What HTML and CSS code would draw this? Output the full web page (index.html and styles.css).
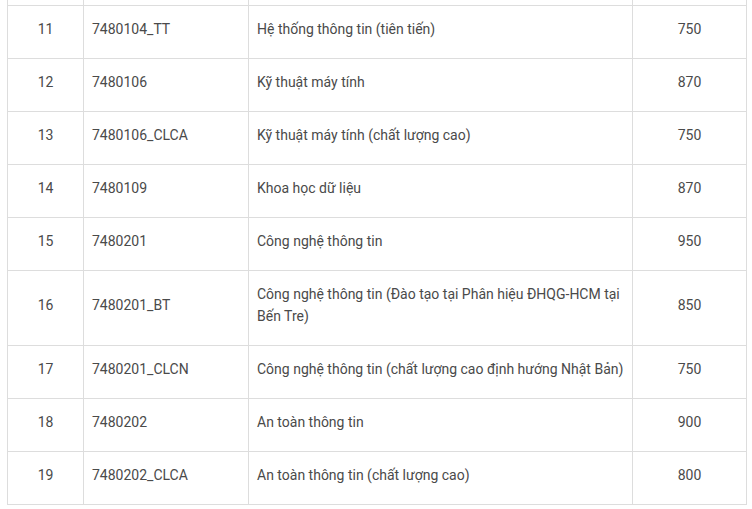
FILE: index.html
```html
<!DOCTYPE html>
<html lang="vi">
<head>
<meta charset="utf-8">
<link rel="stylesheet" href="styles.css">
</head>
<body>
<div class="frame">
<table class="grid">
<colgroup><col class="c1"><col class="c2"><col class="c3"><col class="c4"></colgroup>
<tbody>
<tr class="cut"><td>&nbsp;</td><td>&nbsp;</td><td>&nbsp;</td><td>&nbsp;</td></tr>
<tr><td class="num">11</td><td>7480104_TT</td><td>Hệ thống thông tin (tiên tiến)</td><td class="num">750</td></tr>
<tr><td class="num">12</td><td>7480106</td><td>Kỹ thuật máy tính</td><td class="num">870</td></tr>
<tr><td class="num">13</td><td>7480106_CLCA</td><td>Kỹ thuật máy tính (chất lượng cao)</td><td class="num">750</td></tr>
<tr><td class="num">14</td><td>7480109</td><td>Khoa học dữ liệu</td><td class="num">870</td></tr>
<tr><td class="num">15</td><td>7480201</td><td>Công nghệ thông tin</td><td class="num">950</td></tr>
<tr><td class="num">16</td><td>7480201_BT</td><td>Công nghệ thông tin (Đào tạo tại Phân hiệu ĐHQG-HCM tại Bến Tre)</td><td class="num">850</td></tr>
<tr><td class="num">17</td><td>7480201_CLCN</td><td>Công nghệ thông tin (chất lượng cao định hướng Nhật Bản)</td><td class="num">750</td></tr>
<tr><td class="num">18</td><td>7480202</td><td>An toàn thông tin</td><td class="num">900</td></tr>
<tr><td class="num">19</td><td>7480202_CLCA</td><td>An toàn thông tin (chất lượng cao)</td><td class="num">800</td></tr>
</tbody>
</table>
</div>
</body>
</html>
```
FILE: styles.css
```css
html, body {
  margin: 0;
  padding: 0;
  background: #fff;
}
.frame {
  height: 509px;
  overflow: hidden;
  padding-left: 7px;
}
.grid {
  margin-top: -47px;
  width: 739px;
  border-collapse: collapse;
  table-layout: fixed;
  font-family: Roboto, "Noto Sans", sans-serif;
  font-size: 14px;
  line-height: 22px;
  color: #4a4a4a;
}
.c1 { width: 76px; }
.c2 { width: 165px; }
.c3 { width: 384px; }
.c4 { width: 114px; }
.grid td {
  border: 1px solid #ddd;
  padding: 12px 8px 18px 8px;
  vertical-align: middle;
  text-align: left;
}
.grid td.num {
  text-align: center;
}
.grid tr.cut td {
  border-top: none;
}
```
